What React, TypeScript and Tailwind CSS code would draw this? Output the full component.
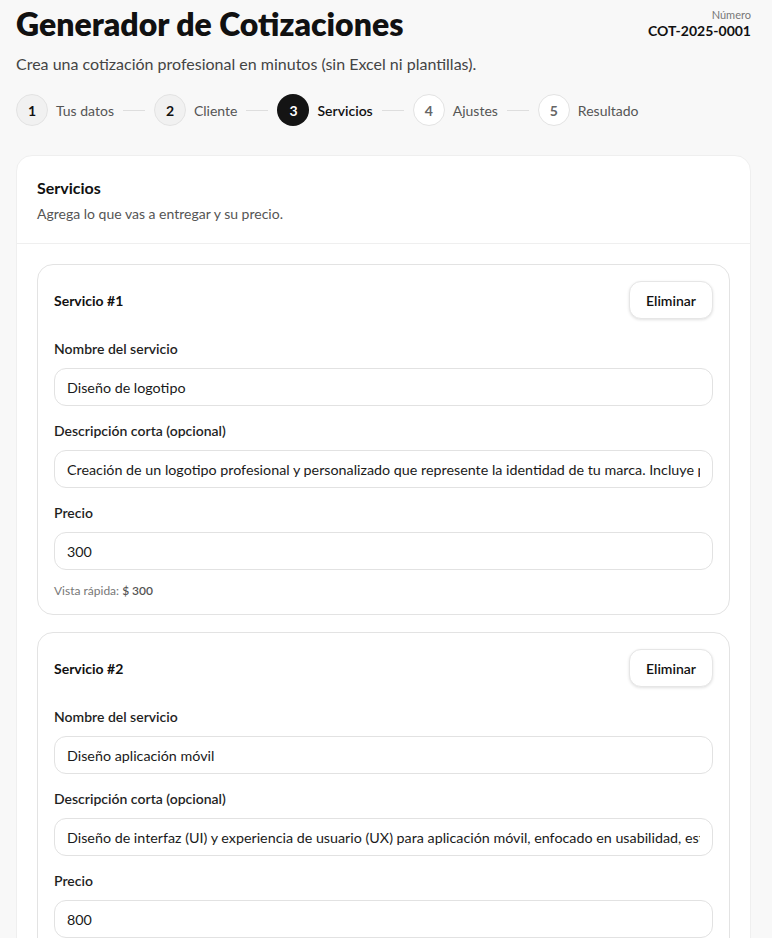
import React from 'react';

type Step = { n: number; label: string; state: 'done' | 'active' | 'todo' };

const steps: Step[] = [
  { n: 1, label: 'Tus datos', state: 'done' },
  { n: 2, label: 'Cliente', state: 'done' },
  { n: 3, label: 'Servicios', state: 'active' },
  { n: 4, label: 'Ajustes', state: 'todo' },
  { n: 5, label: 'Resultado', state: 'todo' },
];

type Service = { name: string; desc: string; price: string };

const services: Service[] = [
  {
    name: 'Diseño de logotipo',
    desc: 'Creación de un logotipo profesional y personalizado que represente la identidad de tu marca. Incluye propuestas y revisiones.',
    price: '300',
  },
  {
    name: 'Diseño aplicación móvil',
    desc: 'Diseño de interfaz (UI) y experiencia de usuario (UX) para aplicación móvil, enfocado en usabilidad, estética y conversión.',
    price: '800',
  },
];

const Field: React.FC<{ label: string; value: string }> = ({ label, value }) => (
  <div className="flex flex-col">
    <label className="text-[14px] font-semibold text-[#1f1f1f] leading-5">{label}</label>
    <input
      readOnly
      value={value}
      className="mt-[9px] h-[38px] w-full rounded-xl border border-[#e2e2e2] bg-white px-3 text-[14.3px] text-[#1a1a1a] outline-none"
    />
  </div>
);

export default function App() {
  return (
    <div
      className="min-h-screen bg-[#f8f8f8] text-[#111]"
      style={{ fontFamily: 'Lato, "Noto Sans", sans-serif' }}
    >
      <div className="ml-4 w-[735px] pt-[6px]">
        {/* Header */}
        <div className="flex items-start justify-between">
          <h1 className="text-[32px] font-extrabold leading-[36px] text-[#111]">
            Generador de Cotizaciones
          </h1>
          <div className="flex flex-col items-end pt-[1px]">
            <span className="text-[11px] leading-4 text-[#777]">Número</span>
            <span className="text-[14px] font-bold leading-4 text-[#111]">COT-2025-0001</span>
          </div>
        </div>
        <p className="mt-[12px] text-[16px] leading-5 text-[#444]">
          Crea una cotización profesional en minutos (sin Excel ni plantillas).
        </p>

        {/* Stepper */}
        <div className="mt-[20px] flex items-center">
          {steps.map((s, i) => (
            <React.Fragment key={s.n}>
              <div className="flex items-center gap-2">
                <div
                  className={
                    s.state === 'active'
                      ? 'flex h-8 w-8 items-center justify-center rounded-full bg-[#141414] text-[14px] font-bold text-white'
                      : s.state === 'done'
                      ? 'flex h-8 w-8 items-center justify-center rounded-full border border-[#e3e3e3] bg-[#f1f1f1] text-[14px] font-bold text-[#111]'
                      : 'flex h-8 w-8 items-center justify-center rounded-full border border-[#e3e3e3] bg-white text-[14px] font-bold text-[#666]'
                  }
                >
                  {s.n}
                </div>
                <span
                  className={
                    s.state === 'active'
                      ? 'text-[14px] font-semibold text-[#111]'
                      : 'text-[14px] text-[#555]'
                  }
                >
                  {s.label}
                </span>
              </div>
              {i < steps.length - 1 && <div className="mx-[9px] h-px w-[22px] bg-[#dedede]" />}
            </React.Fragment>
          ))}
        </div>

        {/* Main card */}
        <div className="mt-[29px] rounded-2xl border border-[#efefef] bg-white">
          <div className="border-b border-[#efefef] px-5 pb-[19px] pt-[22px]">
            <h2 className="text-[16px] font-bold leading-5 text-[#111]">Servicios</h2>
            <p className="mt-[6px] text-[14px] leading-5 text-[#555]">Agrega lo que vas a entregar y su precio.</p>
          </div>

          <div className="flex flex-col gap-[17px] px-5 pt-5 pb-5">
            {services.map((svc, idx) => (
              <div key={idx} className="rounded-2xl border border-[#e3e3e3] bg-white px-4 pt-4 pb-[14px]">
                <div className="flex items-center justify-between">
                  <span className="text-[14px] font-bold text-[#111]">Servicio #{idx + 1}</span>
                  <button className="h-[38px] rounded-xl border border-[#e6e6e6] bg-white px-4 text-[14px] font-semibold text-[#111] shadow-[0_1px_3px_rgba(0,0,0,0.12)]">
                    Eliminar
                  </button>
                </div>
                <div className="mt-[20px] flex flex-col gap-[15px]">
                  <Field label="Nombre del servicio" value={svc.name} />
                  <Field label="Descripción corta (opcional)" value={svc.desc} />
                  <Field label="Precio" value={svc.price} />
                </div>
                <p className="mt-[12px] text-[12px] text-[#777]">
                  Vista rápida: <span className="font-semibold text-[#555]">$ {svc.price}</span>
                </p>
              </div>
            ))}
          </div>
        </div>
      </div>
    </div>
  );
}
